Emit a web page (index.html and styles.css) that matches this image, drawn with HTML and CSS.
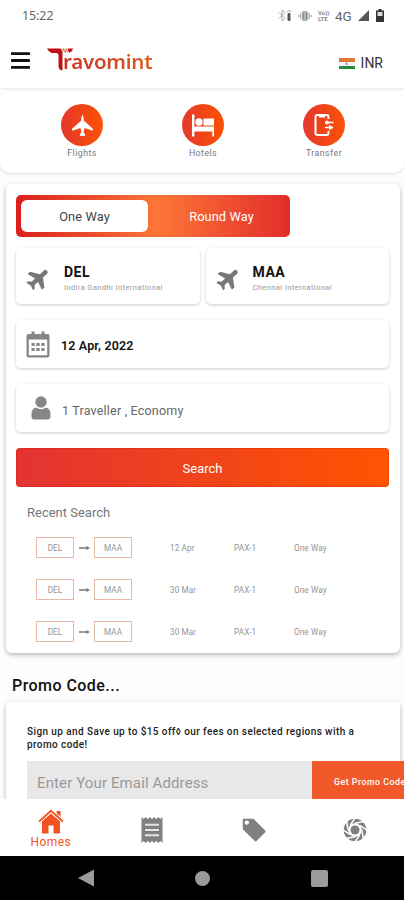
FILE: index.html
```html
<!DOCTYPE html>
<html lang="en">
<head>
<meta charset="utf-8">
<title>Travomint</title>
<link rel="stylesheet" href="styles.css">
</head>
<body>
<svg class="defs" width="0" height="0">
  <symbol id="plane" viewBox="0 0 24 24"><path d="M21.500 16.500v-3L14 8.500V3.700a2 2 0 0 0-4 0v4.800l-7.500 5v3L10 14.300V18.500l-2.500 2V22.500l4.500-1.200 4.500 1.200v-2l-2.500-2v-4.200z"/></symbol>
  <symbol id="arrow" viewBox="0 0 12 6"><path d="M0 2.200h8V.8L12 3 8 5.200V3.800H0z"/></symbol>
</svg>
<div class="phone">
  <div class="status">
    <span class="time">15:22</span>
    <div class="status-icons">
      <svg class="bt" width="14" height="13" viewBox="0 0 14 13"><path d="M1 3.500l6 6-3 2.500V1l3 2.500-6 6" fill="none" stroke="#aaa" stroke-width="1"/><rect x="9.500" y="4" width="3" height="8" rx="1" fill="#555"/><path d="M9 3q2-3 4 0" fill="none" stroke="#999"/></svg>
      <svg class="vib" width="14" height="12" viewBox="0 0 14 12"><path d="M4 1h6v10H4zM2 3h1.500v6H2zM10.500 3H12v6h-1.500zM0 5h1.500v2H0zM12.500 5H14v2h-1.500z" fill="#b4b4b4"/><path d="M5.500 3v6M8.500 3v6" stroke="#888"/></svg>
      <span class="volte"><span>Vo))</span><span>LTE</span></span>
      <span class="net">4G</span>
      <svg class="signal" width="11" height="11" viewBox="0 0 11 11"><path d="M11 0v11H0z" fill="#555"/></svg>
      <svg class="battery" width="8" height="13" viewBox="0 0 8 13"><path d="M2.500 0h3v1.500H8V13H0V1.500h2.500z" fill="#333"/><path d="M1.500 3h5v4h-5z" fill="#ddd"/></svg>
    </div>
  </div>
  <header class="header">
    <svg class="menu" width="19" height="17" viewBox="0 0 19 17"><path d="M1 1.700h17M1 8.500h17M1 15.300h17" stroke="#111" stroke-width="2.800" stroke-linecap="round"/></svg>
    <div class="logo">
      <svg width="26" height="23" viewBox="0 0 26 23"><path d="M0 .5h13.500l2 2.500V22.500q-4-.5-4-4.500V7Q11.500 5 8.500 5H4.500Q1.500 4 0 .5z" fill="#bd1218"/><path d="M15.500.5l3.500 4M18.500.5l2.300 3.500" stroke="#df6a3f" stroke-width="1.200"/><path d="M20.500.5H26q-1 4-4 4.200z" fill="#bd1218"/></svg>
      <span>ravomint</span>
    </div>
    <div class="currency"><span class="flag"><i></i></span><span>INR</span></div>
  </header>
  <nav class="cats">
    <div class="cat"><span class="disc"><svg width="25" height="25" viewBox="0 0 24 24" fill="#fff"><path d="M12 1.500q1.200 2 1.400 6l8.600 7.500v2l-8-2.700-1 4.200 1.500 2v1.300L12 22l-2.500-.2v-1.300l1.500-2-1-4.200L2 17v-2l8.600-7.500q.2-4 1.400-6z"/></svg></span><span class="cat-name">Flights</span></div>
    <div class="cat"><span class="disc"><svg width="24" height="24" viewBox="0 0 24 24" fill="#fff"><path d="M1 1.500h2.400v12H23v10h-1.700v-5H3.400v5H1z"/><circle cx="8" cy="9" r="3.700"/><path d="M12.500 5.500H23v7H12.500z"/></svg></span><span class="cat-name">Hotels</span></div>
    <div class="cat"><span class="disc"><svg width="24" height="24" viewBox="0 0 24 24" fill="none" stroke="#fff" stroke-width="2"><path d="M16.500 6V4q0-2-2-2H5.500Q3.500 2 3.500 4v16q0 2 2 2h9q2 0 2-2v-2M7 3.500h6"/><path d="M13 9.500h8.500M13 14.500h8" stroke-width="1.500"/><circle cx="15" cy="9.500" r="2" fill="#fff" stroke="none"/><path d="M17 11.700l4.500 2.800-4.500 2.800z" fill="#fff" stroke="none"/></svg></span><span class="cat-name">Transfer</span></div>
  </nav>
  <main class="card booking">
    <div class="toggle"><span class="opt on">One Way</span><span class="opt round-way">Round Way</span></div>
    <div class="pair">
      <div class="box place"><svg class="fly" width="27" height="27"><use href="#plane"/></svg><div><b class="code">DEL</b><span class="airport">Indira Gandhi International</span></div></div>
      <div class="box place to"><svg class="fly" width="27" height="27"><use href="#plane"/></svg><div><b class="code">MAA</b><span class="airport">Chennai International</span></div></div>
    </div>
    <div class="box line">
      <svg width="24" height="27" viewBox="0 0 24 27"><path d="M2.500 3H21.500Q23.500 3 23.500 5V24.500Q23.500 26.500 21.500 26.500H2.500Q.5 26.500.5 24.500V5Q.5 3 2.500 3z M2.800 8.500V24.300H21.200V8.500z" fill="#868686" fill-rule="evenodd"/><path d="M7 .5v4M17 .5v4" stroke="#868686" stroke-width="3"/><path d="M5.500 13.500h3.200m1.600 0h3.400m1.600 0h3.200M5.500 18.500h3.200m1.600 0h3.400m1.600 0h3.200" stroke="#868686" stroke-width="3"/></svg>
      <span class="date">12 Apr, 2022</span>
    </div>
    <div class="box line traveller">
      <svg width="20" height="24" viewBox="0 0 20 24" fill="#868686"><circle cx="10" cy="6" r="5.700"/><path d="M5 11.500q5 3.500 10 0 4.500 1 4.500 7v2q0 3-3 3h-13q-3 0-3-3v-2q0-6 4.500-7z"/></svg>
      <span class="pax">1 Traveller , Economy</span>
    </div>
    <div class="search">Search</div>
    <h2 class="recent-title">Recent Search</h2>
    <div class="recent">
      <div class="trip"><span class="tag">DEL</span><svg class="arr"><use href="#arrow"/></svg><span class="tag">MAA</span><span class="day">12 Apr</span><span>PAX-1</span><span>One Way</span></div>
      <div class="trip"><span class="tag">DEL</span><svg class="arr"><use href="#arrow"/></svg><span class="tag">MAA</span><span class="day">30 Mar</span><span>PAX-1</span><span>One Way</span></div>
      <div class="trip"><span class="tag">DEL</span><svg class="arr"><use href="#arrow"/></svg><span class="tag">MAA</span><span class="day">30 Mar</span><span>PAX-1</span><span>One Way</span></div>
    </div>
  </main>
  <section class="promo-wrap">
    <h1 class="promo-title">Promo Code...</h1>
    <div class="card promo">
      <p>Sign up and Save up to $15 off◊ our fees on selected regions with a<br>promo code!</p>
      <div class="form"><span class="email">Enter Your Email Address</span><span class="get">Get Promo Code</span></div>
    </div>
  </section>
  <nav class="tabs">
    <div class="tab home"><svg width="26" height="25" viewBox="0 0 26 25"><path d="M4 12L13 4.500l9 7.500v12.500h-6.500v-8h-5v8H4zM18.500 2h4v7.500l-4-3.500z" fill="#f15322"/><path d="M1 12.500L13 1.800l12 10.700" fill="none" stroke="#fff" stroke-width="3.600"/><path d="M1 12.500L13 1.800l12 10.700" fill="none" stroke="#f15322" stroke-width="1.800"/></svg><span>Homes</span></div>
    <div class="tab"><svg width="22" height="28" viewBox="0 0 22 28"><path d="M.5 1l2.100 2 2.100-2 2.100 2 2.100-2L11 3l2.100-2 2.100 2 2.100-2 2.100 2 2.100-2v26l-2.100-2-2.100 2-2.100-2-2.100 2-2.100-2-2.100 2-2.100-2-2.100 2-2.100-2-2.100 2z" fill="#808080"/><path d="M4 8.800h14M4 14h14M4 19.200h14" stroke="#e4e4e4" stroke-width="2"/></svg></div>
    <div class="tab"><svg width="24" height="24" viewBox="0 0 24 24"><path d="M1 .8h9.500q1 0 1.700.7l11 11q.8.900 0 1.700l-8.700 8.800q-.9.800-1.700 0L1.500 12Q.8 11.300.8 10.500V1z" fill="#808080"/><circle cx="4.800" cy="4.600" r="2.200" fill="#fff"/></svg></div>
    <div class="tab"><svg width="24" height="24" viewBox="0 0 24 24"><circle cx="12" cy="12" r="4.700" fill="#808080"/><circle cx="12" cy="12" r="9" fill="none" stroke="#808080" stroke-width="4.600"/><g fill="none" stroke="#fff" stroke-width="1.500"><path id="blade" d="M12 5.300L21 3.500"/><use href="#blade" transform="rotate(45 12 12)"/><use href="#blade" transform="rotate(90 12 12)"/><use href="#blade" transform="rotate(135 12 12)"/><use href="#blade" transform="rotate(180 12 12)"/><use href="#blade" transform="rotate(225 12 12)"/><use href="#blade" transform="rotate(270 12 12)"/><use href="#blade" transform="rotate(315 12 12)"/><circle cx="12" cy="12" r="5.600"/></g></svg></div>
  </nav>
  <footer class="sys">
    <svg width="16" height="18" viewBox="0 0 17 18"><path d="M17 0v18L0 9z" fill="#9b9b9b"/></svg>
    <span class="round"></span>
    <span class="square"></span>
  </footer>
</div>
</body>
</html>
```
FILE: styles.css
```css
* { box-sizing: border-box; }
body { margin: 0; background: #fff; font-family: Roboto, "Liberation Sans", sans-serif; }
.defs { display: block; height: 0; }
svg { display: block; flex: none; }
.phone { width: 404px; height: 900px; overflow: hidden; display: flex; flex-direction: column; background: #fdfdfd; white-space: nowrap; }
.phone > * { flex: none; }

.status { height: 31px; background: #fff; display: flex; justify-content: space-between; padding: 0 20px 0 22px; align-items: center; color: #666; }
.time { font: 12.5px "Noto Sans", sans-serif; letter-spacing: -.1px; }
.status-icons { display: flex; align-items: center; }
.vib { margin-left: 6px; }
.volte { display: flex; flex-direction: column; width: 12px; margin-left: 6px; font-size: 6px; line-height: 6px; font-weight: 700; color: #888; }
.net { margin-left: 5px; font-size: 13.5px; width: 17px; }
.signal { margin-left: 6px; }
.battery { margin-left: 7px; }

.header { height: 59px; background: #fff; border-bottom: 2px solid #efefef; display: flex; align-items: flex-start; padding: 0 21px 0 11px; }
.menu { margin-top: 21px; }
.logo { display: flex; margin: 17px 0 0 17px; }
.logo span { margin-left: -10px; font: 600 20.5px/26px "Noto Sans", sans-serif; letter-spacing: -.25px; background: linear-gradient(90deg, #cf3024, #d95f20); -webkit-background-clip: text; background-clip: text; color: transparent; }
.currency { margin-left: auto; margin-top: 23px; display: flex; align-items: center; gap: 6px; font-size: 14px; line-height: 18px; color: #333; }
.flag { width: 16px; height: 11px; background: linear-gradient(#dc7b37 0 3.500px, #f4f4f4 3.500px 7.500px, #218b40 7.500px); display: grid; place-items: center; }
.flag i { width: 3px; height: 3px; border-radius: 50%; background: #a9b3cf; }

.cats { height: 82px; margin-top: 1px; background: #fff; border-radius: 10px; box-shadow: 0 1px 3px rgba(0,0,0,.13); display: flex; justify-content: space-between; padding: 13px 57px 0 59px; }
.cat { width: 46px; display: flex; flex-direction: column; align-items: center; }
.disc { width: 42px; height: 42px; border-radius: 50%; background: linear-gradient(90deg, #e43830, #f04416 50%, #fb5209); display: grid; place-items: center; }
.cat-name { margin-top: 1px; font-size: 8.8px; line-height: 12px; letter-spacing: .45px; color: #777; }

.card { margin: 0 4px 0 6px; background: #fff; border-radius: 6px; box-shadow: 0 2px 5px rgba(0,0,0,.27); }
.booking { height: 469px; margin-top: 11px; padding: 11px 11px 0 10px; }
.toggle { width: 274px; height: 42px; padding: 5px; border-radius: 5px; display: flex; background: linear-gradient(90deg, #da1f1c, #fc7637 52%, #e32c2c); font-size: 12.8px; letter-spacing: .1px; }
.opt { flex: 1; display: grid; place-items: center; color: #fff; }
.opt.on { flex: 0 0 127px; background: #fff; border-radius: 6px; color: #444; }
.round-way { padding-left: 10px; }
.pair { display: flex; gap: 6px; margin-top: 11px; }
.box { background: #fff; border-radius: 5px; box-shadow: 0 1px 3px rgba(0,0,0,.21); }
.place { flex: 1; height: 56px; display: flex; padding: 17px 0 0 9px; }
.fly { fill: #777; transform: rotate(48deg); }
.place > div { margin-left: 12px; margin-top: -2px; display: flex; flex-direction: column; }
.place.to > div { margin-left: 11px; }
.code { font-size: 14px; line-height: 18px; font-weight: 700; letter-spacing: .5px; color: #111; }
.airport { font-size: 7.500px; line-height: 12px; letter-spacing: .4px; margin-top: 1px; color: #999; }
.line { height: 48px; margin-top: 16px; display: flex; align-items: center; padding-left: 10px; }
.date { margin-left: 11px; margin-top: 2px; font-size: 12.5px; font-weight: 600; letter-spacing: .15px; color: #111; }
.traveller { padding-left: 15px; }
.pax { margin-left: 11px; margin-top: 4px; font-size: 12.5px; letter-spacing: .2px; color: #666; }
.search { height: 39px; margin-top: 16px; padding-top: 1px; border-radius: 4px; display: grid; place-items: center; color: #fff; font-size: 13px; background: linear-gradient(90deg, #e23333, #ff5400); border: 1px solid rgba(215,20,0,.3); background-origin: border-box; }
.recent-title { margin: 18px 0 0 11px; font-size: 13px; line-height: 16px; font-weight: 400; color: #777; }
.recent { margin: 16px 0 0 20px; display: grid; row-gap: 21px; }
.trip { display: grid; grid-template-columns: 38px 20px 38px 38px 64px 60px auto; align-items: center; font-size: 8.2px; letter-spacing: .1px; color: #959595; }
.trip .day { grid-column: 5; }
.tag { height: 21px; border: 1px solid #e5b8a8; display: grid; place-items: center; }
.arr { width: 11px; height: 6px; margin: auto; fill: #777; }

.promo-wrap { height: 146px; padding-top: 23px; overflow: hidden; }
.promo-title { margin: 0 0 0 12px; font-size: 16px; line-height: 20px; font-weight: 500; letter-spacing: .45px; color: #111; }
.promo { height: 140px; margin-top: 6px; padding: 23px 0 0 21px; border-radius: 4px; }
.promo p { margin: 0; font-size: 10px; line-height: 13px; font-weight: 500; color: #222; letter-spacing: .41px; }
.form { display: flex; width: 390px; height: 42px; margin-top: 10px; }
.email { width: 285px; background: #e8e8e8; color: #999; font-size: 15px; letter-spacing: .12px; line-height: 44px; padding-left: 10px; }
.get { flex: 1; background: #f1592b; color: #fff; font-size: 8.8px; font-weight: 500; line-height: 43px; padding-left: 22px; letter-spacing: .5px; }

.tabs { height: 57px; background: #fff; display: grid; grid-template-columns: repeat(4, 101.5px); position: relative; }
.tab { display: flex; flex-direction: column; align-items: center; justify-content: center; padding-top: 4px; }
.tab.home { color: #f15322; font-size: 12px; line-height: 14px; padding-top: 3px; letter-spacing: .4px; }
.home span { margin-top: 1px; }
.sys { height: 44px; background: #000; display: flex; align-items: center; padding-left: 78px; }
.round { width: 15px; height: 15px; border-radius: 50%; background: #9b9b9b; margin-left: 101px; }
.square { width: 17px; height: 17px; border-radius: 2px; background: #9b9b9b; margin-left: 101px; }
```
